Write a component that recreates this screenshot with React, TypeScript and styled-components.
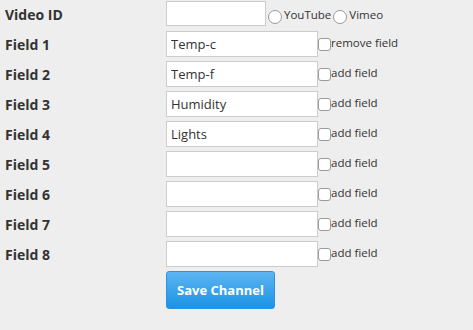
import React from 'react';
import styled, { createGlobalStyle } from 'styled-components';

const GlobalStyle = createGlobalStyle`
  html, body {
    margin: 0;
    padding: 0;
    background: #eeeeee;
  }
  body {
    font-family: "Open Sans", "DejaVu Sans", sans-serif;
    color: #333;
  }
`;

const Form = styled.form`
  display: flex;
  flex-direction: column;
  gap: 4px;
  padding: 1px 0 0 5px;
`;

const Row = styled.div`
  display: flex;
  align-items: flex-start;
  height: 26px;
`;

const Label = styled.label`
  width: 161px;
  flex: none;
  align-self: center;
  font-weight: 700;
  font-size: 14px;
  color: #333;
`;

const TextInput = styled.input<{ $small?: boolean }>`
  box-sizing: border-box;
  width: ${(p) => (p.$small ? '100px' : '152px')};
  height: ${(p) => (p.$small ? '25px' : '26px')};
  margin: 0;
  padding: 0 4px;
  border: 1px solid #cccccc;
  background: #fff;
  font-family: "Open Sans", "DejaVu Sans", sans-serif;
  font-size: 13px;
  color: #333;
  outline: none;
`;

const Check = styled.input`
  appearance: none;
  box-sizing: border-box;
  width: 13px;
  height: 13px;
  margin: 7px 0 0 0;
  border: 1px solid #9a9a9a;
  border-radius: 3px;
  background: #fff;
  flex: none;
`;

const Radio = styled.input`
  appearance: none;
  box-sizing: border-box;
  width: 14px;
  height: 14px;
  margin: 9px 2px 0 2px;
  border: 1px solid #9a9a9a;
  border-radius: 50%;
  background: #fff;
  flex: none;
`;

const SmallText = styled.span`
  font-size: 11.5px;
  line-height: 13px;
  padding-top: 5px;
  color: #333;
  white-space: nowrap;
`;

const RadioText = styled(SmallText)`
  padding-top: 7px;
`;

const ButtonRow = styled.div`
  padding-left: 161px;
`;

const SaveButton = styled.button`
  box-sizing: border-box;
  width: 109px;
  height: 38px;
  border: 1px solid #2a94de;
  border-radius: 3px;
  background: linear-gradient(to bottom, #5db5f1, #1b93e6);
  color: #fff;
  font-family: "Open Sans", "DejaVu Sans", sans-serif;
  font-weight: 700;
  font-size: 13px;
  cursor: pointer;
`;

const fields = [
  { name: 'Field 1', value: 'Temp-c', action: 'remove field' },
  { name: 'Field 2', value: 'Temp-f', action: 'add field' },
  { name: 'Field 3', value: 'Humidity', action: 'add field' },
  { name: 'Field 4', value: 'Lights', action: 'add field' },
  { name: 'Field 5', value: '', action: 'add field' },
  { name: 'Field 6', value: '', action: 'add field' },
  { name: 'Field 7', value: '', action: 'add field' },
  { name: 'Field 8', value: '', action: 'add field' },
];

const App: React.FC = () => {
  return (
    <>
      <GlobalStyle />
      <Form onSubmit={(e) => e.preventDefault()}>
        <Row>
          <Label>Video ID</Label>
          <TextInput $small type="text" />
          <Radio type="radio" name="video_type" />
          <RadioText>YouTube</RadioText>
          <Radio type="radio" name="video_type" />
          <RadioText>Vimeo</RadioText>
        </Row>
        {fields.map((f) => (
          <Row key={f.name}>
            <Label>{f.name}</Label>
            <TextInput type="text" defaultValue={f.value} />
            <Check type="checkbox" />
            <SmallText>{f.action}</SmallText>
          </Row>
        ))}
        <ButtonRow>
          <SaveButton type="submit">Save Channel</SaveButton>
        </ButtonRow>
      </Form>
    </>
  );
};

export default App;
